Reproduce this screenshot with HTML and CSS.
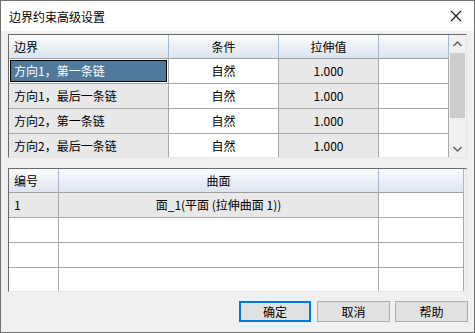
FILE: index.html
```html
<!DOCTYPE html>
<html lang="zh-CN">
<head>
  <meta charset="UTF-8" />
  <title>边界约束高级设置</title>
  <link rel="stylesheet" href="styles.css">
</head>
<body>
  <div class="dialog">
    <div class="titlebar">
      <span class="title">边界约束高级设置</span>
      <svg class="close" width="12" height="12" viewBox="0 0 12 12">
        <path d="M1 1 L11 11 M11 1 L1 11" stroke="#111" stroke-width="1.1" fill="none" />
      </svg>
    </div>

    <div class="content">
      <!-- 边界表 -->
      <div class="grid grid-top">
        <div class="rows">
          <div class="row head cols-top">
            <div class="cell left">边界</div>
            <div class="cell">条件</div>
            <div class="cell">拉伸值</div>
            <div class="cell"></div>
          </div>
          <div class="row cols-top">
            <div class="cell left sel">方向1，第一条链</div>
            <div class="cell">自然</div>
            <div class="cell gray">1.000</div>
            <div class="cell"></div>
          </div>
          <div class="row cols-top">
            <div class="cell left gray">方向1，最后一条链</div>
            <div class="cell">自然</div>
            <div class="cell gray">1.000</div>
            <div class="cell"></div>
          </div>
          <div class="row cols-top">
            <div class="cell left gray">方向2，第一条链</div>
            <div class="cell">自然</div>
            <div class="cell gray">1.000</div>
            <div class="cell"></div>
          </div>
          <div class="row cols-top">
            <div class="cell left gray">方向2，最后一条链</div>
            <div class="cell">自然</div>
            <div class="cell gray">1.000</div>
            <div class="cell"></div>
          </div>
        </div>
        <div class="scrollbar">
          <div class="sb-btn">
            <svg width="9" height="6" viewBox="0 0 9 6"><path d="M0.5 5 L4.5 1 L8.5 5" stroke="#606060" stroke-width="1.4" fill="none" /></svg>
          </div>
          <div class="sb-track"><div class="sb-thumb"></div></div>
          <div class="sb-btn">
            <svg width="9" height="6" viewBox="0 0 9 6"><path d="M0.5 1 L4.5 5 L8.5 1" stroke="#606060" stroke-width="1.4" fill="none" /></svg>
          </div>
        </div>
      </div>

      <!-- 曲面表 -->
      <div class="grid grid-bottom">
        <div class="rows">
          <div class="row head cols-bottom">
            <div class="cell left">编号</div>
            <div class="cell">曲面</div>
            <div class="cell"></div>
          </div>
          <div class="row cols-bottom">
            <div class="cell left gray">1</div>
            <div class="cell gray">面_1(平面 (拉伸曲面 1))</div>
            <div class="cell"></div>
          </div>
          <div class="row cols-bottom">
            <div class="cell left"></div>
            <div class="cell"></div>
            <div class="cell"></div>
          </div>
          <div class="row cols-bottom">
            <div class="cell left"></div>
            <div class="cell"></div>
            <div class="cell"></div>
          </div>
          <div class="row cols-bottom">
            <div class="cell left"></div>
            <div class="cell"></div>
            <div class="cell"></div>
          </div>
        </div>
      </div>

      <div class="buttons">
        <button class="btn default">确定</button>
        <button class="btn">取消</button>
        <button class="btn">帮助</button>
      </div>
    </div>
  </div>
</body>
</html>
```

FILE: styles.css
```css
* {
  margin: 0;
  padding: 0;
  box-sizing: border-box;
}

body {
  font-family: "Noto Sans CJK SC", "Noto Sans", sans-serif;
  font-size: 12px;
  color: #000;
  background: #fff;
}

.dialog {
  width: 475px;
  height: 333px;
  border: 1px solid #707070;
  background: #f0f0f0;
  display: flex;
  flex-direction: column;
}

.titlebar {
  height: 30px;
  background: #fff;
  display: flex;
  align-items: center;
  justify-content: space-between;
  padding: 0 12px 0 8px;
}

.title {
  font-size: 12px;
}

.content {
  padding: 3px 7px 0 7px;
  display: flex;
  flex-direction: column;
}

/* 表格外框 */
.grid {
  height: 124px;
  border: 1px solid;
  border-color: #6a6a6a #e6e6e6 #e6e6e6 #6a6a6a;
  display: flex;
  overflow: hidden;
  background: #f0f0f0;
}

.grid-bottom {
  margin-top: 10px;
}

.rows {
  flex: 1;
  overflow: hidden;
}

.row {
  display: grid;
  height: 25px;
}

.cols-top {
  grid-template-columns: 160px 110px 100px 70px;
}

.cols-bottom {
  grid-template-columns: 50px 320px 85px;
}

.cell {
  border-right: 1px solid #a9a9a9;
  border-bottom: 1px solid #a9a9a9;
  background: #fff;
  display: flex;
  align-items: center;
  justify-content: center;
  white-space: nowrap;
  overflow: hidden;
  line-height: 1;
}

.cell.left {
  justify-content: flex-start;
  padding-left: 5px;
}

.cell.gray {
  background: #e8e8e8;
}

/* 选中的单元格 */
.cell.sel {
  background: #4f7a9b;
  color: #fff;
  box-shadow: inset 0 0 0 1px #fff, inset 0 0 0 2px #000;
}

.row.head {
  height: 24px;
}

.head .cell {
  background: linear-gradient(#fbfcfd, #dce4ef);
  border-right-color: #a3bad3;
  border-bottom-color: #a0a0a0;
}

/* 滚动条 */
.scrollbar {
  width: 17px;
  display: flex;
  flex-direction: column;
  background: #f0f0f0;
}

.sb-btn {
  height: 17px;
  display: flex;
  align-items: center;
  justify-content: center;
}

.sb-track {
  flex: 1;
  padding: 1px 1px 0 1px;
}

.sb-thumb {
  height: 65px;
  background: #cdcdcd;
}

/* 按钮 */
.buttons {
  display: flex;
  justify-content: flex-end;
  gap: 5px;
  margin-top: 9px;
  margin-right: -1px;
}

.btn {
  width: 73px;
  height: 21px;
  font-family: inherit;
  font-size: 12px;
  color: #000;
  background: #e1e1e1;
  border: 1px solid #adadad;
}

.btn.default {
  border: 2px solid #0078d7;
  margin-right: 1px;
  width: 72px;
}
```
